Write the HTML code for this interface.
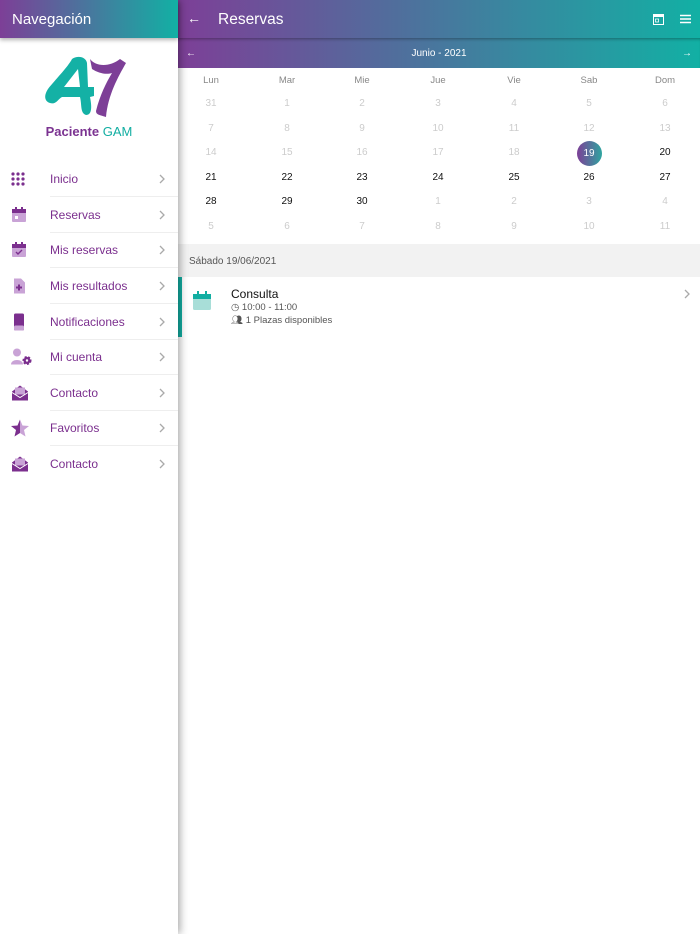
<!DOCTYPE html>
<html><head><meta charset="utf-8"><style>
*{margin:0;padding:0;box-sizing:border-box}
body{width:700px;height:934px;overflow:hidden;font-family:"Liberation Sans",sans-serif;background:#fff;position:relative}
.side{position:absolute;left:0;top:0;width:178px;height:934px;background:#fff;box-shadow:2px 0 8px rgba(0,0,0,.35);z-index:5}
.shead{height:38px;background:linear-gradient(90deg,#7d3f97,#12b0a4);color:#fff;font-size:15px;padding:11px 0 0 12px;box-shadow:0 2px 4px rgba(0,0,0,.3)}
.logo{position:absolute;left:40px;top:55px}
.brand{position:absolute;top:124px;left:0;width:178px;text-align:center;font-size:13px;font-weight:bold;color:#7b3391}
.brand span{color:#12aea2;font-weight:normal}
.item{position:absolute;left:0;width:178px;height:35.5px}
.item .t{position:absolute;left:50px;top:50%;transform:translateY(-50%);font-size:12px;color:#7b2f8e}
.item .ch{position:absolute;left:159px;top:50%;transform:translateY(-50%)}
.item .line{position:absolute;left:50px;right:0;bottom:0;border-bottom:1px solid #eee}
.item svg{position:absolute;left:11px;top:50%;transform:translateY(-50%)}
.main{position:absolute;left:178px;top:0;width:522px;height:934px}
.mhead{height:38px;background:linear-gradient(90deg,#7d3f97,#12b0a4);color:#fff;position:relative}
.mbar{height:30px;background:linear-gradient(90deg,#7d3f97,#12b0a4);color:#fff;font-size:10px;text-align:center;line-height:31px;position:relative;box-shadow:inset 0 3px 3px -2px rgba(0,0,0,.35)}
.cal{position:relative;height:176px}
.c{position:absolute;width:40px;margin-left:-20px;text-align:center;font-size:10px;color:#ccc}
.c.h{color:#888;font-size:9.5px}
.c.b{color:#111}
.sel{position:absolute;width:25px;height:25px;border-radius:50%;background:linear-gradient(90deg,#7d3f97,#2ea5a0);color:#fff;font-size:10px;text-align:center;line-height:25px}
.gray{height:33px;background:#f2f2f2;font-size:10px;color:#555;padding:12px 0 0 11px}
.card{height:60px;position:relative;border-left:4px solid #12aea2}
</style></head><body>
<div class="side">
<div class="shead">Navegación</div>
<svg class="logo" width="95" height="65" viewBox="0 0 95 65">
<path d="M32 4 C28 12 14 26 8 34 C4 40 4 46 10 48 C16 50 18 44 22 42 L40 42 C42 50 40 58 46 60 C52 60 52 52 50 42 L54 41 L54 32 L48 32 L47 8 C46 2 38 0 32 4 Z M24 32 L38 14 L40 32 Z" fill="#14b1a5"/>
<path d="M50 4 C56 12 70 12 80 4 L86 8 C78 22 68 40 66 62 C60 60 56 60 56 56 C60 40 66 28 72 18 C66 20 58 18 52 14 Z" fill="#7d3f97"/>
</svg>
<div class="brand">Paciente <span>GAM</span></div>
<div class="item" style="top:161px"><svg width="14" height="14" viewBox="0 0 14 14" fill="#7b2f8e"><circle cx="2" cy="2" r="1.6"/><circle cx="7" cy="2" r="1.6"/><circle cx="12" cy="2" r="1.6"/><circle cx="2" cy="7" r="1.6"/><circle cx="7" cy="7" r="1.6"/><circle cx="12" cy="7" r="1.6"/><circle cx="2" cy="12" r="1.6"/><circle cx="7" cy="12" r="1.6"/><circle cx="12" cy="12" r="1.6"/></svg><span class="t">Inicio</span><svg class="ch" width="6" height="10" viewBox="0 0 6 10"><path d="M1 1L5 5L1 9" stroke="#aaa" stroke-width="1.3" fill="none"/></svg><div class="line"></div></div>
<div class="item" style="top:197px"><svg width="16" height="16" viewBox="0 0 16 16"><rect x="1" y="2" width="14" height="13" rx="1" fill="#c9a3d6"/><rect x="1" y="2" width="14" height="4" fill="#7b2f8e"/><rect x="4" y="0" width="2" height="3" fill="#7b2f8e"/><rect x="10" y="0" width="2" height="3" fill="#7b2f8e"/><rect x="4" y="9" width="3" height="3" fill="#fff"/></svg><span class="t">Reservas</span><svg class="ch" width="6" height="10" viewBox="0 0 6 10"><path d="M1 1L5 5L1 9" stroke="#aaa" stroke-width="1.3" fill="none"/></svg><div class="line"></div></div>
<div class="item" style="top:232px"><svg width="16" height="16" viewBox="0 0 16 16"><rect x="1" y="2" width="14" height="13" rx="1" fill="#c9a3d6"/><rect x="1" y="2" width="14" height="4" fill="#7b2f8e"/><rect x="4" y="0" width="2" height="3" fill="#7b2f8e"/><rect x="10" y="0" width="2" height="3" fill="#7b2f8e"/><path d="M5 10 L7 12 L11 8" stroke="#7b2f8e" stroke-width="1.4" fill="none"/></svg><span class="t">Mis reservas</span><svg class="ch" width="6" height="10" viewBox="0 0 6 10"><path d="M1 1L5 5L1 9" stroke="#aaa" stroke-width="1.3" fill="none"/></svg><div class="line"></div></div>
<div class="item" style="top:268px"><svg width="16" height="17" viewBox="0 0 16 17"><path d="M3 1 H10 L14 5 V16 H3 Z" fill="#c9a3d6"/><path d="M8 7 V13 M5 10 H11" stroke="#7b2f8e" stroke-width="2"/></svg><span class="t">Mis resultados</span><svg class="ch" width="6" height="10" viewBox="0 0 6 10"><path d="M1 1L5 5L1 9" stroke="#aaa" stroke-width="1.3" fill="none"/></svg><div class="line"></div></div>
<div class="item" style="top:304px"><svg width="16" height="17" viewBox="0 0 16 17"><rect x="3" y="0" width="10" height="17" rx="1.5" fill="#7b2f8e"/><rect x="3" y="12" width="10" height="5" rx="1.5" fill="#c9a3d6"/></svg><span class="t">Notificaciones</span><svg class="ch" width="6" height="10" viewBox="0 0 6 10"><path d="M1 1L5 5L1 9" stroke="#aaa" stroke-width="1.3" fill="none"/></svg><div class="line"></div></div>
<div class="item" style="top:339px"><svg width="22" height="17" viewBox="0 0 22 17"><circle cx="6" cy="4" r="4" fill="#c9a3d6"/><path d="M0 16 C0 10 12 10 12 16 Z" fill="#c9a3d6"/><circle cx="16" cy="12" r="3.5" fill="#7b2f8e" stroke="#7b2f8e" stroke-width="2" stroke-dasharray="2 1.5"/><circle cx="16" cy="12" r="1.2" fill="#fff"/></svg><span class="t">Mi cuenta</span><svg class="ch" width="6" height="10" viewBox="0 0 6 10"><path d="M1 1L5 5L1 9" stroke="#aaa" stroke-width="1.3" fill="none"/></svg><div class="line"></div></div>
<div class="item" style="top:375px"><svg width="18" height="17" viewBox="0 0 18 17"><path d="M1 7 L9 1 L17 7 V16 H1 Z" fill="#7b2f8e"/><rect x="4" y="3" width="10" height="7" fill="#c9a3d6"/><path d="M1 8 L9 13 L17 8" stroke="#fff" stroke-width="1" fill="none"/></svg><span class="t">Contacto</span><svg class="ch" width="6" height="10" viewBox="0 0 6 10"><path d="M1 1L5 5L1 9" stroke="#aaa" stroke-width="1.3" fill="none"/></svg><div class="line"></div></div>
<div class="item" style="top:410px"><svg width="18" height="17" viewBox="0 0 18 17"><path d="M9 0 L11.5 6 L18 6.5 L13 10.5 L14.5 17 L9 13.5 Z" fill="#c9a3d6"/><path d="M9 0 L6.5 6 L0 6.5 L5 10.5 L3.5 17 L9 13.5 Z" fill="#7b2f8e"/></svg><span class="t">Favoritos</span><svg class="ch" width="6" height="10" viewBox="0 0 6 10"><path d="M1 1L5 5L1 9" stroke="#aaa" stroke-width="1.3" fill="none"/></svg><div class="line"></div></div>
<div class="item" style="top:446px"><svg width="18" height="17" viewBox="0 0 18 17"><path d="M1 7 L9 1 L17 7 V16 H1 Z" fill="#7b2f8e"/><rect x="4" y="3" width="10" height="7" fill="#c9a3d6"/><path d="M1 8 L9 13 L17 8" stroke="#fff" stroke-width="1" fill="none"/></svg><span class="t">Contacto</span><svg class="ch" width="6" height="10" viewBox="0 0 6 10"><path d="M1 1L5 5L1 9" stroke="#aaa" stroke-width="1.3" fill="none"/></svg></div>
</div>
<div class="main">
<div class="mhead">
<span style="position:absolute;left:9px;top:10px;font-size:14px">←</span>
<span style="position:absolute;left:40px;top:11px;font-size:15.5px">Reservas</span>
<svg style="position:absolute;left:475px;top:13px" width="11" height="12" viewBox="0 0 11 12"><rect x="0.5" y="1.5" width="10" height="10" fill="none" stroke="#fff"/><rect x="0.5" y="1.5" width="10" height="2.5" fill="#fff"/><rect x="2.5" y="6" width="3" height="3" fill="none" stroke="#fff" stroke-width=".8"/></svg>
<svg style="position:absolute;left:502px;top:14px" width="11" height="10" viewBox="0 0 11 10"><path d="M0 1.5H11M0 5H11M0 8.5H11" stroke="#fff" stroke-width="1.4"/></svg>
</div>
<div class="mbar"><span style="position:absolute;left:8px;font-size:10px">←</span>Junio - 2021<span style="position:absolute;right:8px;font-size:10px">→</span></div>
<div class="cal" id="cal"></div>
<div class="gray">Sábado 19/06/2021</div>
<div class="card">
<svg style="position:absolute;left:11px;top:14px" width="18" height="19" viewBox="0 0 18 19"><rect x="0" y="3" width="18" height="16" rx="1.5" fill="#a8ded8"/><rect x="0" y="3" width="18" height="5" fill="#12aea2"/><rect x="4" y="0" width="2" height="4" fill="#12aea2"/><rect x="12" y="0" width="2" height="4" fill="#12aea2"/></svg>
<div style="position:absolute;left:49px;top:10px;font-size:12px;color:#111">Consulta</div>
<div style="position:absolute;left:49px;top:25px;font-size:9.5px;color:#555">◷ 10:00 - 11:00</div>
<div style="position:absolute;left:49px;top:38px;font-size:9.5px;color:#555">👥︎ 1 Plazas disponibles</div>
<svg style="position:absolute;left:502px;top:12px" width="6" height="10" viewBox="0 0 6 10"><path d="M1 1L5 5L1 9" stroke="#aaa" stroke-width="1.3" fill="none"/></svg>
</div>
</div>
<script>
var cal=document.getElementById('cal');var xs=[33,109,184,260,336,411,487];
var h=['Lun','Mar','Mie','Jue','Vie','Sab','Dom'];
var rows=[[31,1,2,3,4,5,6],[7,8,9,10,11,12,13],[14,15,16,17,18,19,20],[21,22,23,24,25,26,27],[28,29,30,1,2,3,4],[5,6,7,8,9,10,11]];
var s='';h.forEach(function(t,i){s+='<div class="c h" style="left:'+xs[i]+'px;top:7px">'+t+'</div>'});
rows.forEach(function(r,ri){r.forEach(function(d,ci){var y=30+ri*24.6;var k=ri*7+ci;var cls='c';
if(k==19){s+='<div class="sel" style="left:'+(xs[ci]-12.5)+'px;top:'+(y-6)+'px">19</div>';return;}
if(k>=20&&k<=30)cls+=' b';s+='<div class="'+cls+'" style="left:'+xs[ci]+'px;top:'+y+'px">'+d+'</div>';})});
cal.innerHTML=s;
</script>
</body></html>
